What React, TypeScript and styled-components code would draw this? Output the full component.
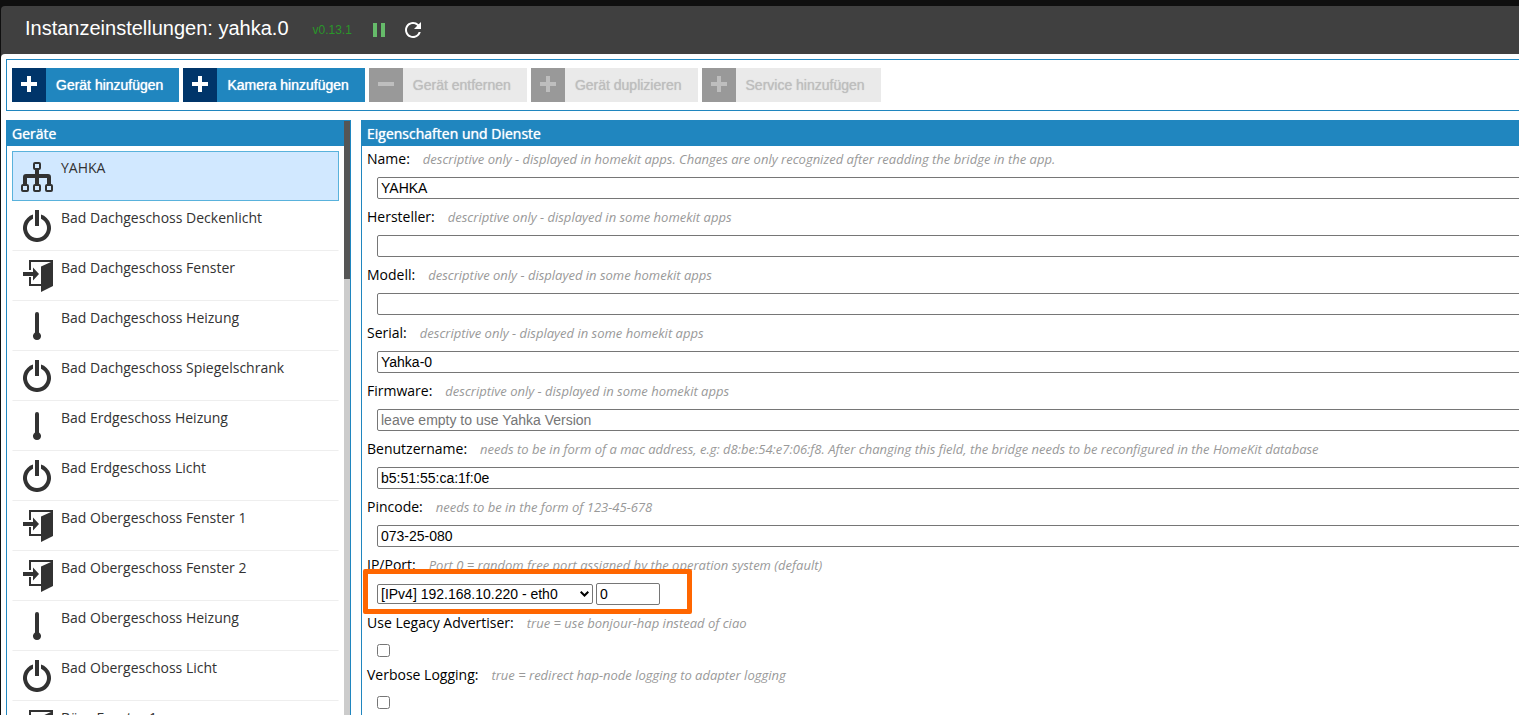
import React from "react";
import styled, { createGlobalStyle } from "styled-components";

const blue = "#2086bf";
const sans = `"Liberation Sans", Arial, Helvetica, sans-serif`;

const GlobalStyle = createGlobalStyle`
  *, *::before, *::after { box-sizing: border-box; }
  body {
    margin: 0;
    background: #0f0f0f;
    color: #000;
    font: 14px/20px "Open Sans", sans-serif;
  }
`;

const Dialog = styled.div`
  display: flex;
  flex-direction: column;
  height: 100vh;
  padding: 6px 0 0 1px;
  overflow: hidden;
`;

const Header = styled.header`
  display: flex;
  flex: none;
  align-items: center;
  height: 52px;
  margin-bottom: -4px;
  padding: 0 24px 4px;
  border-radius: 4px 0 0 0;
  background: #404040;
  color: #fff;
  font-family: ${sans};
`;

const Title = styled.h1`
  margin: 0 24px 4px 0;
  font-size: 20px;
  line-height: 24px;
  font-weight: 400;
`;

const Version = styled.span`
  margin-right: 15px;
  font-size: 12px;
  color: #2a962a;
`;

const HeaderButton = styled.button<{ $color: string }>`
  display: flex;
  margin-right: 10px;
  padding: 0;
  border: 0;
  background: none;
  color: ${(p) => p.$color};
`;

const Body = styled.main`
  display: flex;
  flex: 1;
  flex-direction: column;
  gap: 9px;
  min-height: 0;
  margin-right: -10px;
  padding: 5px 0 0 5px;
  border-radius: 4px 0 0 0;
  background: #fff;
`;

const Toolbar = styled.div`
  display: flex;
  flex: none;
  gap: 4px;
  padding: 8px 5px;
  border: 1px solid ${blue};
`;

const ToolButton = styled.button`
  display: flex;
  align-items: center;
  height: 34px;
  padding: 0 16px 0 0;
  border: 0;
  background: ${blue};
  color: #fff;
  font: 14px/20px ${sans};
  text-shadow: 0 0 1px currentColor;
  white-space: nowrap;

  &:disabled {
    background: #eaeaea;
    color: #bebebe;
  }
`;

const ToolIcon = styled.span`
  display: flex;
  align-items: center;
  justify-content: center;
  width: 34px;
  height: 34px;
  margin-right: 10px;
  padding-bottom: 2px;
  background: #00356a;

  ${ToolButton}:disabled & {
    background: #999;
  }
`;

const Columns = styled.div`
  display: flex;
  flex: 1;
  gap: 10px;
  min-height: 0;
`;

const DevicePanel = styled.section`
  display: flex;
  flex: none;
  width: 345px;
  border: 1px solid ${blue};
  border-bottom: 0;
  overflow: hidden;
`;

const DeviceScroll = styled.div`
  flex: 1;
  overflow: hidden;
`;

const ScrollTrack = styled.div`
  width: 6px;
  background: #ccc;
`;

const ScrollThumb = styled.div`
  height: 158px;
  background: #555;
`;

const PropertyPanel = styled.section`
  flex: 1;
  min-width: 0;
  border: 1px solid ${blue};
  border-bottom: 0;
  overflow: hidden;
`;

const PanelTitle = styled.h2`
  margin: 0;
  padding: 3px 5px 2px;
  background: ${blue};
  color: #fff;
  font-size: 14px;
  line-height: 20px;
  font-weight: 400;
  text-shadow: 0 0 1px currentColor;
`;

const DeviceList = styled.ul`
  margin: 0;
  padding: 5px;
  list-style: none;
`;

const Device = styled.li<{ $selected?: boolean }>`
  display: flex;
  gap: 8px;
  height: 50px;
  padding: ${(p) => (p.$selected ? "8px" : "9px")} 8px 0;
  border: 1px solid ${(p) => (p.$selected ? "#59b2dc" : "transparent")};
  border-bottom-color: ${(p) => (p.$selected ? "#59b2dc" : "#eee")};
  border-top-width: ${(p) => (p.$selected ? "1px" : "0")};
  background: ${(p) => (p.$selected ? "#d1e8ff" : "#fff")};
  color: #323232;
`;

const DeviceName = styled.span`
  margin-top: -2px;
`;

const Field = styled.div`
  position: relative;
  padding: 3px 0 5px 5px;
`;

const FieldHead = styled.div`
  display: flex;
  gap: 13px;
  height: 23px;
  white-space: nowrap;
`;

const Hint = styled.span`
  font-size: 13px;
  font-style: italic;
  color: #999;
`;

const FieldControls = styled.div`
  display: flex;
  align-items: center;
  gap: 3px;
  padding: 5px 0 0 10px;
`;

const TextInput = styled.input<{ $narrow?: boolean }>`
  flex: ${(p) => (p.$narrow ? "none" : "1")};
  width: ${(p) => (p.$narrow ? "64px" : "100%")};
  height: 22px;
  padding: 0 3px;
  border: 1px solid #767676;
  border-radius: 2px;
  background: #fff;
  color: #000;
  font: 14px/20px ${sans};

  &::placeholder {
    color: #757575;
  }
`;

const SelectWrap = styled.span`
  position: relative;
  display: flex;
`;

const Select = styled.select`
  appearance: none;
  width: 216px;
  height: 20px;
  padding: 0 20px 0 3px;
  border: 1px solid #767676;
  border-radius: 2px;
  background: #fff;
  color: #000;
  font: 14px/18px ${sans};
`;

const SelectArrow = styled.svg`
  position: absolute;
  top: 7px;
  right: 4px;
  pointer-events: none;
`;

const Checkbox = styled.input`
  width: 13px;
  height: 13px;
  margin: 3px 0 0;
`;

const Highlight = styled.div`
  position: absolute;
  top: 17px;
  left: 1px;
  width: 329px;
  height: 45px;
  border: 5px solid #ff6600;
  border-radius: 2px;
  pointer-events: none;
`;

type IconKind = "bridge" | "power" | "door" | "thermo";

function DeviceIcon({ kind }: { kind: IconKind }) {
  return (
    <svg width="32" height="32" viewBox="0 0 32 32" fill="#323232" aria-hidden="true">
      {kind === "bridge" && (
        <>
          <path d="M14 10h4v4h9a3 3 0 0 1 3 3v7h-4v-6h-8v6h-4v-6H6v6H2v-7a3 3 0 0 1 3-3h9z" />
          <g fill="none" stroke="#323232" strokeWidth="2">
            <rect x="13" y="3" width="6" height="6" rx="1" />
            <rect x="1" y="25" width="6" height="6" rx="1" />
            <rect x="13" y="25" width="6" height="6" rx="1" />
            <rect x="25" y="25" width="6" height="6" rx="1" />
          </g>
        </>
      )}
      {kind === "power" && (
        <path d="M14 0h4v16h-4zM12 4.6A14 14 0 1 0 20 4.6V8.8A10 10 0 1 1 12 8.8z" />
      )}
      {kind === "door" && (
        <path d="M8 0h24v26l-12 6V6.5L30 2H10v8H8zM8 17h2v7h10v2H8zM2 12h10V7.5L18 14l-6 6.5V16H2z" />
      )}
      {kind === "thermo" && (
        <path d="M14 4a2 2 0 0 1 4 0v18.6a4 4 0 1 1-4 0z" />
      )}
    </svg>
  );
}

const devices: { name: string; icon: IconKind }[] = [
  { name: "YAHKA", icon: "bridge" },
  { name: "Bad Dachgeschoss Deckenlicht", icon: "power" },
  { name: "Bad Dachgeschoss Fenster", icon: "door" },
  { name: "Bad Dachgeschoss Heizung", icon: "thermo" },
  { name: "Bad Dachgeschoss Spiegelschrank", icon: "power" },
  { name: "Bad Erdgeschoss Heizung", icon: "thermo" },
  { name: "Bad Erdgeschoss Licht", icon: "power" },
  { name: "Bad Obergeschoss Fenster 1", icon: "door" },
  { name: "Bad Obergeschoss Fenster 2", icon: "door" },
  { name: "Bad Obergeschoss Heizung", icon: "thermo" },
  { name: "Bad Obergeschoss Licht", icon: "power" },
  { name: "Büro Fenster 1", icon: "door" },
];

const tools = [
  { label: "Gerät hinzufügen", minus: false, disabled: false },
  { label: "Kamera hinzufügen", minus: false, disabled: false },
  { label: "Gerät entfernen", minus: true, disabled: true },
  { label: "Gerät duplizieren", minus: false, disabled: true },
  { label: "Service hinzufügen", minus: false, disabled: true },
];

const some = "descriptive only - displayed in some homekit apps";

const textFields = [
  {
    id: "name",
    label: "Name:",
    hint: "descriptive only - displayed in homekit apps. Changes are only recognized after readding the bridge in the app.",
    value: "YAHKA",
  },
  { id: "manufacturer", label: "Hersteller:", hint: some, value: "" },
  { id: "model", label: "Modell:", hint: some, value: "" },
  { id: "serial", label: "Serial:", hint: some, value: "Yahka-0" },
  { id: "firmware", label: "Firmware:", hint: some, value: "", placeholder: "leave empty to use Yahka Version" },
  {
    id: "username",
    label: "Benutzername:",
    hint: "needs to be in form of a mac address, e.g: d8:be:54:e7:06:f8. After changing this field, the bridge needs to be reconfigured in the HomeKit database",
    value: "b5:51:55:ca:1f:0e",
  },
  { id: "pincode", label: "Pincode:", hint: "needs to be in the form of 123-45-678", value: "073-25-080" },
];

const checkFields = [
  { id: "legacy", label: "Use Legacy Advertiser:", hint: "true = use bonjour-hap instead of ciao" },
  { id: "verbose", label: "Verbose Logging:", hint: "true = redirect hap-node logging to adapter logging" },
];

function FieldLabel({ id, label, hint }: { id: string; label: string; hint: string }) {
  return (
    <FieldHead>
      <label htmlFor={id}>{label}</label>
      <Hint>{hint}</Hint>
    </FieldHead>
  );
}

export default function App() {
  return (
    <>
      <GlobalStyle />
      <Dialog>
        <Header>
          <Title>Instanzeinstellungen: yahka.0</Title>
          <Version>v0.13.1</Version>
          <HeaderButton type="button" aria-label="Pause" $color="#66bb6a">
            <svg width="24" height="24" viewBox="0 0 24 24" fill="currentColor">
              <path d="M6 19h4V5H6v14zm8-14v14h4V5h-4z" />
            </svg>
          </HeaderButton>
          <HeaderButton type="button" aria-label="Neu laden" $color="#fff">
            <svg width="24" height="24" viewBox="0 0 24 24" fill="currentColor">
              <path d="M17.65 6.35A7.958 7.958 0 0 0 12 4c-4.42 0-7.99 3.58-7.99 8s3.57 8 7.99 8c3.73 0 6.84-2.55 7.73-6h-2.08A5.99 5.99 0 0 1 12 18c-3.31 0-6-2.69-6-6s2.69-6 6-6c1.66 0 3.14.69 4.22 1.78L13 11h7V4l-2.35 2.35z" />
            </svg>
          </HeaderButton>
        </Header>
        <Body>
          <Toolbar>
            {tools.map((t) => (
              <ToolButton key={t.label} type="button" disabled={t.disabled}>
                <ToolIcon>
                  <svg width="16" height="16" viewBox="0 0 16 16" fill="currentColor" aria-hidden="true">
                    <path d={t.minus ? "M0 6h16v4H0z" : "M6 0h4v6h6v4h-6v6H6v-6H0V6h6z"} />
                  </svg>
                </ToolIcon>
                {t.label}
              </ToolButton>
            ))}
          </Toolbar>
          <Columns>
            <DevicePanel>
              <DeviceScroll>
                <PanelTitle>Geräte</PanelTitle>
                <DeviceList>
                  {devices.map((d, i) => (
                    <Device key={d.name} $selected={i === 0}>
                      <DeviceIcon kind={d.icon} />
                      <DeviceName>{d.name}</DeviceName>
                    </Device>
                  ))}
                </DeviceList>
              </DeviceScroll>
              <ScrollTrack>
                <ScrollThumb />
              </ScrollTrack>
            </DevicePanel>
            <PropertyPanel>
              <PanelTitle>Eigenschaften und Dienste</PanelTitle>
              {textFields.map((f) => (
                <Field key={f.id}>
                  <FieldLabel id={f.id} label={f.label} hint={f.hint} />
                  <FieldControls>
                    <TextInput id={f.id} type="text" defaultValue={f.value} placeholder={f.placeholder} />
                  </FieldControls>
                </Field>
              ))}
              <Field>
                <FieldLabel
                  id="ip"
                  label="IP/Port:"
                  hint="Port 0 = random free port assigned by the operation system (default)"
                />
                <FieldControls>
                  <SelectWrap>
                    <Select id="ip">
                      <option>[IPv4] 192.168.10.220 - eth0</option>
                    </Select>
                    <SelectArrow width="9" height="6" viewBox="0 0 9 6" fill="none" stroke="#000" strokeWidth="2">
                      <path d="M.7.7 4.5 4.5 8.3.7" />
                    </SelectArrow>
                  </SelectWrap>
                  <TextInput $narrow type="text" aria-label="Port" defaultValue="0" />
                </FieldControls>
                <Highlight />
              </Field>
              {checkFields.map((f) => (
                <Field key={f.id}>
                  <FieldLabel id={f.id} label={f.label} hint={f.hint} />
                  <FieldControls>
                    <Checkbox id={f.id} type="checkbox" />
                  </FieldControls>
                </Field>
              ))}
            </PropertyPanel>
          </Columns>
        </Body>
      </Dialog>
    </>
  );
}
